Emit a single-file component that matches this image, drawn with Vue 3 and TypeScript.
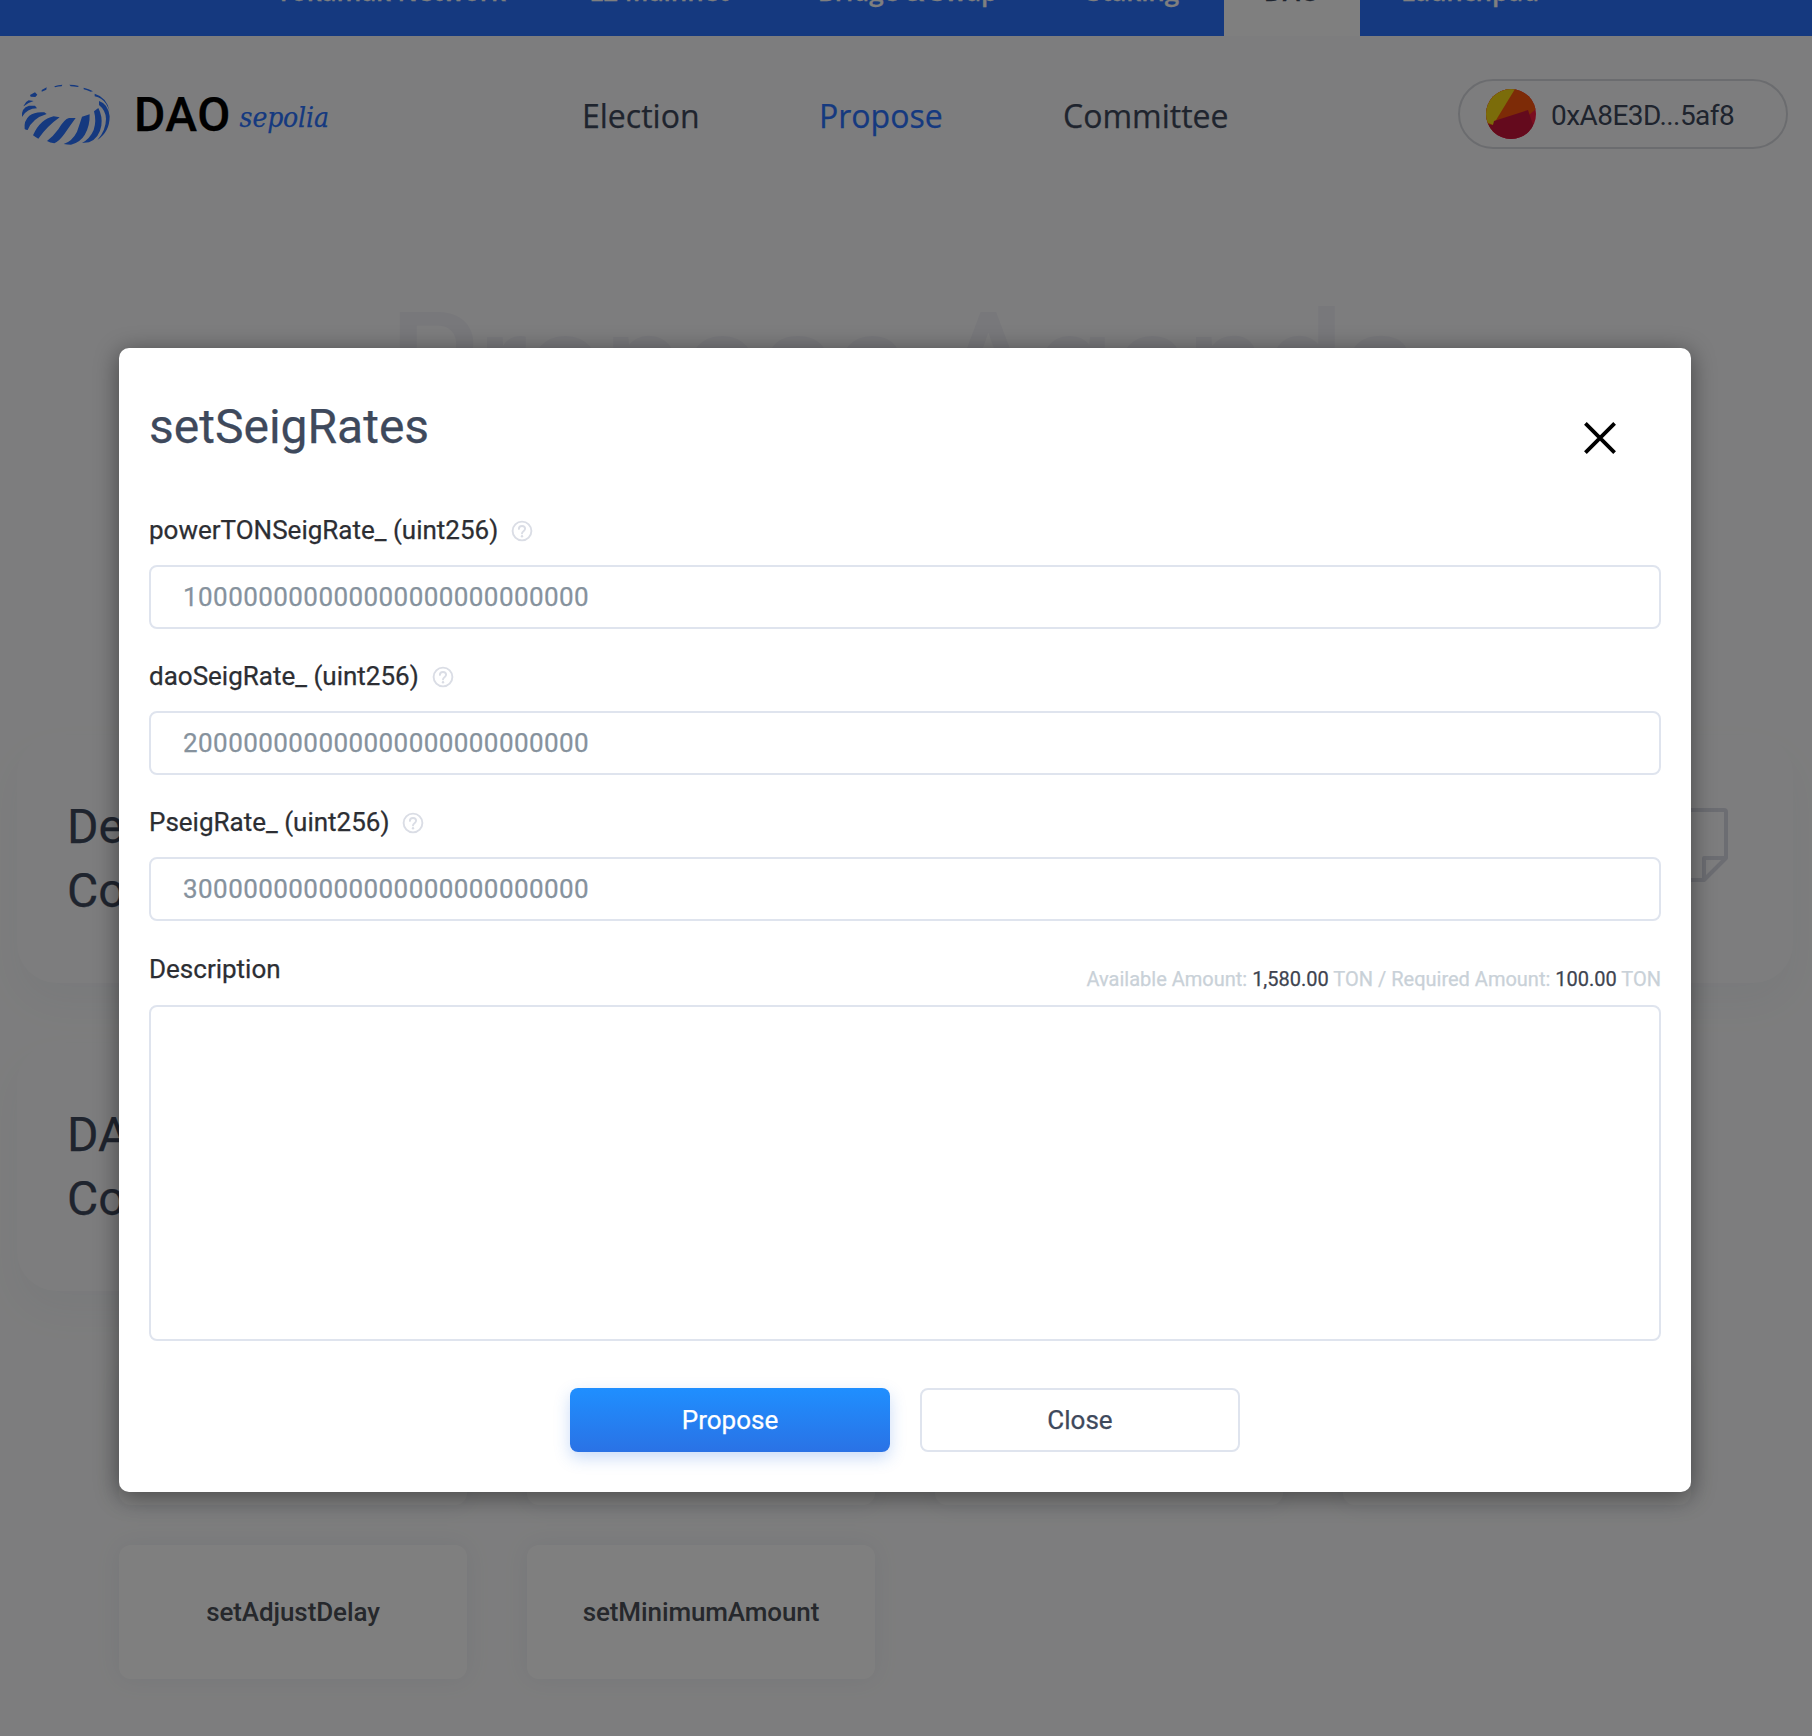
<script setup lang="ts">
interface Tab { label: string; width: number; active?: boolean }
interface Field { label: string; placeholder: string }

const tabs: Tab[] = [
  { label: 'Tokamak Network', width: 308 },
  { label: 'L2 Mainnet', width: 228 },
  { label: 'Bridge & Swap', width: 269 },
  { label: 'Staking', width: 182 },
  { label: 'DAO', width: 136, active: true },
  { label: 'Launchpad', width: 220 },
]

const menu = ['Election', 'Propose', 'Committee']

const zeros = '0'.repeat(26)
const fields: Field[] = [
  { label: 'powerTONSeigRate_ (uint256)', placeholder: '1' + zeros },
  { label: 'daoSeigRate_ (uint256)', placeholder: '2' + zeros },
  { label: 'PseigRate_ (uint256)', placeholder: '3' + zeros },
]

const functions = ['', '', '', '', 'setAdjustDelay', 'setMinimumAmount']
</script>

<template>
  <div class="app">
    <div class="page">
      <nav class="topbar">
        <span
          v-for="t in tabs"
          :key="t.label"
          class="tab"
          :class="{ active: t.active }"
          :style="{ width: t.width + 'px' }"
        >{{ t.label }}</span>
      </nav>

      <header class="header">
        <div class="brand">
          <svg class="logo" width="90" height="62" viewBox="34 40 270 186" fill="#2a72ff">
            <path d="M134 47 Q145 42 158 42 L156 47 Q146 47 136 50Z" />
            <path d="M179 42 Q194 42 208 46 L204 49 Q192 48 183 47Z" />
            <path d="M222 51 Q238 54 250 62 L243 63 Q232 59 222 56Z" />
            <path d="M96 58 L111 50 L110 57 L96 63Z" />
            <path d="M61 73 Q70 69 76 65 L83 72 L77 79 L63 78Z" />
            <path d="M255 69 Q292 80 300 122 Q290 94 274 84 Q266 79 255 77Z" />
            <path d="M42 105 Q46 94 57 89 L72 91 Q54 96 42 107Z" />
            <path d="M37 139 Q34 112 58 105 L76 105 L82 113 Q52 113 37 139Z" />
            <path d="M45 175 Q42 150 59 135 Q76 122 104 125 L111 130 Q68 143 54 178 Q48 178 45 175Z" />
            <path d="M70 194 Q92 145 132 137 L150 140 Q113 166 86 204 Q77 200 70 194Z" />
            <path d="M112 211 Q130 198 146 176 Q164 145 178 142 L198 142 Q180 167 164 190 Q149 211 134 218 Q121 216 112 211Z" />
            <path d="M162 220 Q188 211 202 183 Q213 151 217 138 L240 131 Q241 167 225 193 Q211 216 184 222 Q172 222 162 220Z" />
            <path d="M217 217 Q241 204 252 178 Q261 151 253 122 L266 112 Q279 137 275 165 Q269 202 238 215Z" />
            <path d="M263 208 Q289 179 289 144 Q288 119 268 103 L268 91 Q295 99 300 137 Q300 184 263 208Z" />
          </svg>
          <span class="brand-name">DAO</span>
          <span class="brand-net">sepolia</span>
        </div>
        <div class="menu">
          <span v-for="m in menu" :key="m" :class="['m-' + m.toLowerCase()]">{{ m }}</span>
        </div>
        <div class="account">
          <svg width="50" height="50" viewBox="0 0 50 50">
            <defs><clipPath id="avatar"><circle cx="25" cy="25" r="25" /></clipPath></defs>
            <g clip-path="url(#avatar)">
              <rect width="50" height="50" fill="#f61b40" />
              <path d="M0 0H50V20L43 26L0 50Z" fill="#fa560e" />
              <path d="M0 0H29L7 36L0 33Z" fill="#f7d914" />
              <path d="M0 35L7 36L8 32L42 21L50 45V50H0Z" fill="#c8143a" />
            </g>
          </svg>
          <span>0xA8E3D...5af8</span>
        </div>
      </header>

      <h1 class="hero">Propose Agenda</h1>

      <section class="contracts">
        <div class="contract">
          <h2>De<br />Co</h2>
        </div>
        <div class="contract">
          <svg class="doc" width="62" height="74" viewBox="0 0 62 74" fill="none" stroke="#d8dae5" stroke-width="4" stroke-linejoin="round">
            <path d="M4 2H58Q60 2 60 4V50L38 72H4Q2 72 2 70V4Q2 2 4 2Z" />
            <path d="M60 50H38V72" />
          </svg>
        </div>
        <div class="contract">
          <h2>DA<br />Co</h2>
        </div>
      </section>

      <section class="functions">
        <div v-for="(f, i) in functions" :key="i" class="fn">{{ f }}</div>
      </section>
    </div>

    <div class="overlay">
      <div class="modal">
        <div class="modal-head">
          <h3>setSeigRates</h3>
          <svg class="close-icon" width="32" height="32" viewBox="0 0 32 32" stroke="#000" stroke-width="3.8">
            <path d="M1.4 1.4L30.6 30.6M30.6 1.4L1.4 30.6" />
          </svg>
        </div>

        <div v-for="f in fields" :key="f.label" class="field">
          <label>
            <span>{{ f.label }}</span>
            <svg width="22" height="22" viewBox="0 0 22 22" fill="none" stroke="#dadde5" stroke-width="1.9">
              <circle cx="11" cy="11" r="9.4" />
              <path d="M7.9 8.9C7.9 4.9 14.1 5 14.1 8.8C14.1 11.1 11 11.2 11 13.4" stroke-linecap="round" />
              <circle cx="11" cy="16.3" r="1.2" fill="#dadde5" stroke="none" />
            </svg>
          </label>
          <div class="input">{{ f.placeholder }}</div>
        </div>

        <div class="desc-head">
          <span class="desc-label">Description</span>
          <span class="amounts">Available Amount: <b>1,580.00</b> TON / Required Amount: <b>100.00</b> TON</span>
        </div>
        <div class="textarea"></div>

        <div class="actions">
          <button class="btn primary">Propose</button>
          <button class="btn">Close</button>
        </div>
      </div>
    </div>
  </div>
</template>

<style>
body { margin: 0; background: #fafbfc; }
</style>

<style scoped>
* { box-sizing: border-box; }
.app {
  position: relative;
  width: 1812px;
  height: 1736px;
  overflow: hidden;
  font-family: Roboto, "Liberation Sans", sans-serif;
  -webkit-text-stroke: 0.25px;
  background: #fbfbfc;
}
/* the page is scrolled, so the top bar is partly out of view */
.page { margin-top: -52px; }
.topbar {
  display: flex;
  height: 88px;
  padding-left: 237px;
  background: #2a72ff;
}
.tab {
  text-align: center;
  font: 600 26px/87px "Open Sans", sans-serif;
  letter-spacing: -0.1px;
  color: #fff;
  white-space: nowrap;
}
.tab.active { background: #fff; color: #3e495c; }
.header {
  display: flex;
  align-items: center;
  height: 158px;
}
.brand { display: flex; width: 582px; padding-left: 21px; align-items: center; }
.brand-name {
  font-size: 48px;
  font-weight: 500;
  line-height: 60px;
  letter-spacing: 0.4px;
  margin-left: 23px;
  color: #000;
}
.brand-net {
  font: italic 28px/60px "DejaVu Serif Condensed", "DejaVu Serif", serif;
  letter-spacing: -0.15px;
  margin-left: 9px;
  padding-top: 6px;
  color: #2a72ff;
}
.menu { display: flex; font: 32px/60px "Open Sans", sans-serif; color: #3e495c; }
.menu span { width: 237px; padding-top: 1px; }
.menu .m-propose { color: #2a72ff; width: 244px; }
.account {
  display: flex;
  align-items: center;
  gap: 15px;
  width: 330px;
  height: 70px;
  margin: -2px 24px 0 auto;
  padding-left: 26px;
  border: 2px solid #d7d9df;
  border-radius: 35px;
  font-size: 28px;
  letter-spacing: -0.55px;
  -webkit-text-stroke: 0;
  color: #3e495c;
}
.account span { padding-top: 2px; }
.hero {
  margin: 90px 4px 0 0;
  text-align: center;
  font-size: 139px;
  font-weight: 500;
  line-height: 160px;
  -webkit-text-stroke: 0;
  color: #f0f0f7;
  white-space: nowrap;
}
.contracts {
  display: grid;
  grid-template-columns: 858px 858px;
  gap: 60px;
  margin: 291px 0 0 17px;
}
.contract {
  display: flex;
  justify-content: space-between;
  height: 248px;
  padding: 60px 65px 0 50px;
  border-radius: 40px;
  background: #fbfbfc;
  box-shadow: 0 20px 40px rgba(97, 126, 170, 0.055);
}
.contract h2 { margin: 0; font-size: 48px; line-height: 64px; font-weight: 400; color: #3e495c; }
.doc { margin: 13px 0 0 auto; }
.functions {
  display: grid;
  grid-template-columns: repeat(4, 348px);
  gap: 40px 60px;
  margin: 80px 0 0 119px;
}
.fn {
  display: flex;
  align-items: center;
  justify-content: center;
  height: 134px;
  border-radius: 12px;
  background: #fff;
  box-shadow: 0 0 24px rgba(97, 126, 170, 0.1);
  font-size: 26px;
  font-weight: 500;
  letter-spacing: -0.1px;
  -webkit-text-stroke: 0;
  color: #4c5159;
}
.overlay {
  position: absolute;
  inset: 0;
  padding: 348px 0 0 119px;
  background: rgba(0, 0, 0, 0.5);
}
.modal {
  width: 1572px;
  height: 1144px;
  padding: 0 30px;
  border-radius: 10px;
  background: #fff;
  box-shadow: 0 4px 24px rgba(0, 0, 0, 0.45);
}
.modal-head { display: flex; justify-content: space-between; height: 161px; padding-top: 51px; }
.modal-head h3 { margin: 0; font-size: 48px; line-height: 56px; font-weight: 400; color: #3e495c; }
.close-icon { margin: 23px 45px 0 0; }
.field { height: 146px; }
.field label {
  display: flex;
  align-items: center;
  gap: 13px;
  height: 56px;
  padding-bottom: 12px;
  font-size: 26px;
  color: #2c2e33;
}
.field label span { padding-bottom: 2px; }
.input {
  height: 64px;
  padding-left: 32px;
  border: 2px solid #dfe4ee;
  border-radius: 8px;
  font-size: 26px;
  line-height: 60px;
  letter-spacing: 0.43px;
  color: #86929d;
}
.desc-head { display: flex; justify-content: space-between; height: 58px; }
.desc-label { font-size: 26px; line-height: 44px; color: #2c2e33; }
.amounts { font-size: 20px; line-height: 64px; color: #c9d1d8; }
.amounts b { font-weight: 400; color: #3e4450; }
.textarea { height: 336px; border: 2px solid #dfe4ee; border-radius: 8px; }
.actions { display: flex; justify-content: center; gap: 30px; margin-top: 47px; }
.btn {
  width: 320px;
  height: 64px;
  border: 2px solid #dfe4ee;
  border-radius: 8px;
  background: #fff;
  font-family: inherit;
  font-size: 26px;
  -webkit-text-stroke: 0.25px;
  color: #3e495c;
}
.btn.primary {
  border: 0;
  color: #fff;
  background: linear-gradient(#1f8fff, #2a72e5);
  box-shadow: 0 6px 16px rgba(42, 114, 229, 0.25);
}
</style>
